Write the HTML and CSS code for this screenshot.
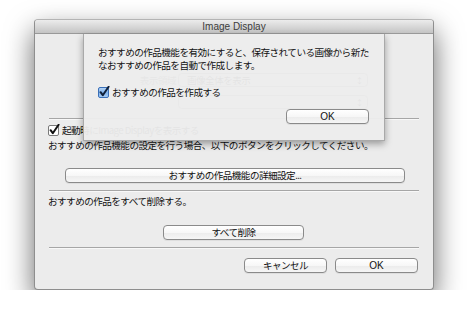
FILE: index.html
```html
<!DOCTYPE html>
<html lang="ja">
<head>
    <meta charset="UTF-8">
    <meta name="viewport" content="width=device-width, initial-scale=1.0">
    <title>Image Display</title>
    <link rel="stylesheet" href="styles.css">
</head>
<body>
    <div class="window">
        <div class="titlebar">Image Display</div>
        <div class="content">
            <div class="display-settings">
                <div class="setting-row">
                    <span class="setting-label">表示領域</span>
                    <div class="popup"><span class="popup-value">画像全体を表示</span><span class="popup-arrows">&#8597;</span></div>
                </div>
                <div class="setting-row">
                    <span class="setting-label"></span>
                    <div class="popup"><span class="popup-value"></span><span class="popup-arrows">&#8597;</span></div>
                </div>
            </div>
            <div class="separator"></div>
            <label class="check-row">
                <span class="checkbox">
                    <svg width="13" height="13" viewBox="0 0 13 13">
                        <rect x="0.5" y="1.5" width="10" height="10" rx="1.5" fill="#fff" stroke="#7a7a7a"/>
                        <path d="M2.6 6.2 L4.8 9.2 L10.6 0.8" fill="none" stroke="#111" stroke-width="2" stroke-linecap="round" stroke-linejoin="round"/>
                    </svg>
                </span>
                起動時にImage Displayを表示する
            </label>
            <p class="text-line">おすすめの作品機能の設定を行う場合、以下のボタンをクリックしてください。</p>
            <div class="button-row">
                <button class="btn btn-wide">おすすめの作品機能の詳細設定...</button>
            </div>
            <div class="separator"></div>
            <p class="text-line">おすすめの作品をすべて削除する。</p>
            <div class="button-row">
                <button class="btn btn-delete">すべて削除</button>
            </div>
            <div class="separator"></div>
            <div class="footer-buttons">
                <button class="btn btn-footer">キャンセル</button>
                <button class="btn btn-footer btn-latin">OK</button>
            </div>
        </div>

        <div class="sheet">
            <p class="sheet-text">おすすめの作品機能を有効にすると、保存されている画像から新た<br>なおすすめの作品を自動で作成します。</p>
            <label class="check-row sheet-check">
                <span class="checkbox">
                    <svg width="13" height="13" viewBox="0 0 13 13">
                        <defs>
                            <linearGradient id="blue" x1="0" y1="0" x2="0" y2="1">
                                <stop offset="0" stop-color="#b9d7f7"/>
                                <stop offset="0.5" stop-color="#7fb1ea"/>
                                <stop offset="1" stop-color="#a9cdf5"/>
                            </linearGradient>
                        </defs>
                        <rect x="0.5" y="1.5" width="10" height="10" rx="1.5" fill="url(#blue)" stroke="#3a6fb8"/>
                        <path d="M2.6 6.2 L4.8 9.2 L10.6 0.8" fill="none" stroke="#10203a" stroke-width="2" stroke-linecap="round" stroke-linejoin="round"/>
                    </svg>
                </span>
                おすすめの作品を作成する
            </label>
            <div class="sheet-buttons">
                <button class="btn btn-sheet btn-latin">OK</button>
            </div>
        </div>
    </div>
</body>
</html>
```

FILE: styles.css
```css
body {
    margin: 0;
    padding: 0;
    background-color: #ffffff;
    font-family: "Noto Sans CJK JP", sans-serif;
    font-size: 9.6px;
    letter-spacing: -0.55px;
    color: #111;
}
.window {
    position: relative;
    width: 398px;
    margin: 19px 0 0 34px;
    background: #ececec;
    border: 1px solid #8e8e8e;
    border-top-color: #b4b4b4;
    border-radius: 4px;
    box-shadow: 0 12px 28px rgba(0,0,0,0.6);
}
.titlebar {
    height: 13px;
    line-height: 13px;
    text-align: center;
    font-family: "Liberation Sans", Arial, sans-serif;
    font-size: 10px;
    letter-spacing: 0;
    color: #3c3c3c;
    background: linear-gradient(#ececec, #c4c4c4);
    border-bottom: 1px solid #999;
    border-radius: 3px 3px 0 0;
}
.content {
    padding: 0 14px 16px 13px;
}
.display-settings {
    height: 84px;
    display: flex;
    flex-direction: column;
}
.setting-row {
    display: flex;
    align-items: center;
    margin-top: 39px;
    height: 14px;
    line-height: 9px;
}
.setting-row + .setting-row {
    margin-top: 8px;
}
.setting-label {
    width: 128px;
    text-align: right;
    padding-right: 2px;
    color: #555;
}
.popup {
    display: flex;
    align-items: center;
    justify-content: space-between;
    width: 176px;
    height: 12px;
    padding: 0 4px 0 8px;
    border: 1px solid #999;
    border-radius: 4px;
    background: #fff;
}
.popup-arrows {
    font-size: 8px;
}
.separator {
    height: 0;
    border-top: 1px solid #a6a6a6;
    border-bottom: 1px solid #f8f8f8;
    margin-left: 1px;
}
.check-row {
    display: flex;
    align-items: center;
    height: 12px;
    margin-top: 4px;
}
.checkbox {
    display: flex;
    width: 13px;
    height: 13px;
    margin-right: 1px;
}
.text-line {
    margin: 3px 0 0 0;
    height: 13px;
    line-height: 13px;
}
.button-row {
    display: flex;
    justify-content: center;
    margin-top: 16px;
    margin-bottom: 7px;
}
.btn {
    height: 15px;
    padding: 0;
    font-family: "Noto Sans CJK JP", sans-serif;
    font-size: 9.6px;
    letter-spacing: -0.55px;
    line-height: 13px;
    color: #111;
    border: 1px solid #8a8a8a;
    border-radius: 4px;
    background: linear-gradient(#ffffff, #f7f7f7 50%, #ececec 55%, #f6f6f6);
    box-shadow: 0 1px 0 rgba(0,0,0,0.06);
}
.btn-latin {
    font-family: "Liberation Sans", Arial, sans-serif;
    font-size: 10px;
    letter-spacing: 0;
}
.btn-wide {
    width: 340px;
    margin-left: 3px;
}
.btn-delete {
    width: 141px;
    margin-top: 1px;
}
.footer-buttons {
    display: flex;
    justify-content: flex-end;
    gap: 8px;
    margin-top: 9px;
    padding-right: 1px;
}
.btn-footer {
    width: 83px;
}
.sheet {
    position: absolute;
    left: 48px;
    top: 14px;
    width: 272px;
    height: 106px;
    padding: 0 14px 0 14px;
    background: rgba(236,236,236,0.96);
    border: 1px solid #a9a9a9;
    border-top: none;
    box-shadow: 0 3px 7px rgba(0,0,0,0.35);
}
.sheet-text {
    margin: 12px 0 0 0;
    line-height: 13px;
}
.sheet-check {
    margin-top: 14px;
}
.sheet-buttons {
    display: flex;
    justify-content: flex-end;
    margin-top: 11px;
    padding-right: 1px;
}
.btn-sheet {
    width: 83px;
}
```
